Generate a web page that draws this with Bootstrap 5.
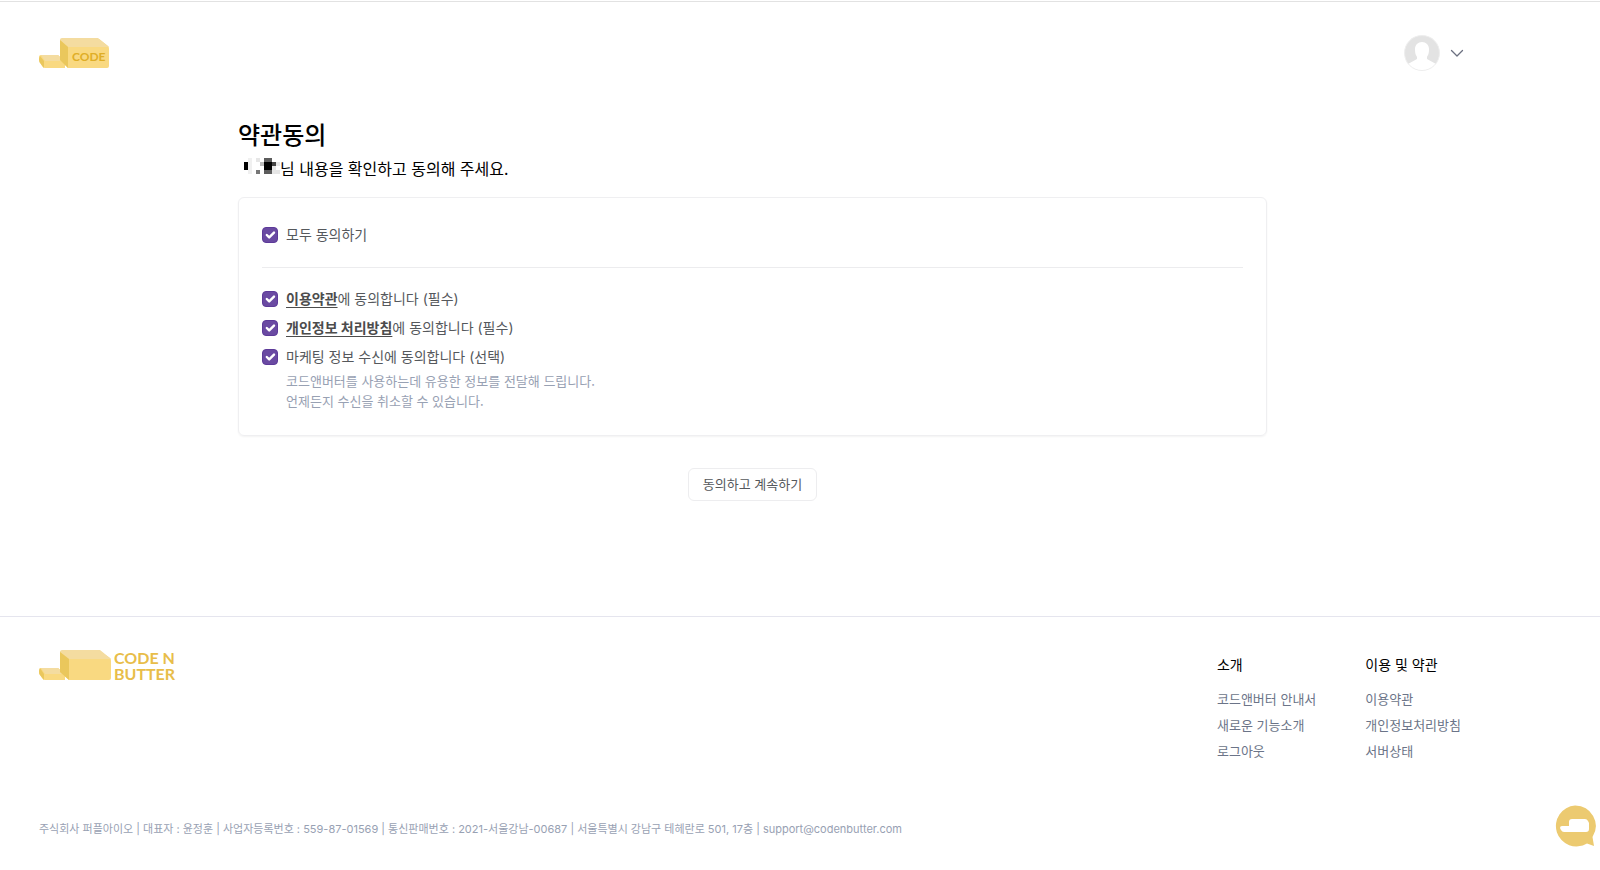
<!DOCTYPE html>
<html lang="ko">
<head>
<meta charset="utf-8">
<meta name="viewport" content="width=device-width, initial-scale=1">
<title>약관동의 - 코드앤버터</title>
<link href="https://cdn.jsdelivr.net/npm/bootstrap@5.3.0/dist/css/bootstrap.min.css" rel="stylesheet">
<style>
  body { font-family: Inter, "Noto Sans CJK KR", sans-serif; font-size: 14px; line-height: 20px; color: #55585c; border-top: 1px solid #fff; }
  .page-top { border-top: 1px solid #e2e2e2; }
  .shell { max-width: 1505px; padding-left: 39px; padding-right: 39px; }
  .site-header { height: 102px; }
  .terms-wrap { max-width: 1029px; padding-bottom: 114px; }
  .page-title { font-size: 24px; line-height: 32px; font-weight: 500; color: #000; }
  .page-sub, .hint, .btn-agree, .footer-cols a { font-family: "Noto Sans CJK KR", sans-serif; }
  .page-sub { font-size: 16px; line-height: 24px; color: #000; margin-top: 4px; margin-bottom: 17px; }
  .terms-card { border: 1px solid #efeff1; border-radius: 6px; padding: 27px 23px 24px; box-shadow: 0 1px 2px rgba(0,0,0,.05); }
  .terms-card hr { color: #ececee; opacity: 1; margin: 22px 0 21px; }
  .terms-card .form-check { padding-left: 24px; min-height: 0; margin: 0; }
  .terms-card .form-check-input { width: 16px; height: 16px; margin: 2px 0 0 -24px; border-radius: 4px; }
  .terms-card .form-check-input:checked { background-color: #6a4aa2; border-color: #5d3a99; background-size: 16px; }
  .terms-card a { color: #4c4c4c; font-weight: 700; text-underline-offset: 3px; }
  .stack { display: grid; row-gap: 9px; }
  .hint { font-size: 13px; color: #98a1b3; }
  .btn-agree { font-size: 13px; line-height: 20px; padding: 5px 14px 6px; color: #55585c; border: 1px solid #ededef; border-radius: 6px; background: #fff; }
  .site-footer { border-top: 1px solid #e5e5ee; margin-top: 1px; }
  .footer-cols { padding-top: 38px; padding-right: 5px; column-gap: 49px; }
  .footer-cols h2 { font-size: 14px; line-height: 20px; font-weight: 400; color: #000; margin-bottom: 14px; }
  .footer-cols ul { display: grid; row-gap: 6px; }
  .footer-cols a { font-size: 13px; line-height: 20px; color: #6b7488; text-decoration: none; }
  .footer-logo { margin-top: 33px; column-gap: 3px; font-size: 16px; line-height: 16px; color: #e8bd49; text-decoration: none; }
  .legal { font-size: 11px; line-height: 20px; color: #98a1b3; padding-top: 58px; padding-bottom: 30px; }
  .logo-text { font-family: Lato, sans-serif; font-weight: 700; }
  .btn-chat { right: 4px; bottom: 23px; }
</style>
</head>
<body>
<div class="page-top">
  <header class="shell site-header d-flex align-items-center justify-content-between">
    <a href="#" aria-label="CODE">
      <svg class="d-block" width="71" height="31" viewBox="0 0 71 31">
        <path d="M2 17h17l7 7v6H6q-2 0-3-2l-2-4q-1-1-1-3v-2q0-2 2-2z" fill="#f9d981"/>
        <path d="M2 17h17l7 6H6z" fill="#f4dca0"/>
        <path d="M1 18l4 5v7l-4-5q-1-1-1-4z" fill="#eac75c"/>
        <path d="M23 1h37l9 7q1 1 1 3v17q0 2-2 2H29l-8-8V3q0-2 2-2z" fill="#f9d981"/>
        <path d="M23 0h36l11 9H29l-8-7q0-2 2-2z" fill="#f4dca0"/>
        <path d="M21 2l8 7v21l-8-8z" fill="#eac75c"/>
        <text class="logo-text" x="33" y="23" font-size="12" fill="#dfae27">CODE</text>
      </svg>
    </a>
    <button type="button" class="btn p-0 border-0 d-flex align-items-center gap-2" aria-label="내 계정">
      <svg width="36" height="36" viewBox="0 0 36 36">
        <circle cx="18" cy="18" r="17.5" fill="#e3e3e3"/>
        <path d="M18 7c4 0 7 3 7 7 0 5-1 6-2 8v2l9 5c-3 4-8 6.500-14 6.500S7 33 4 29l9-5v-2c-1-2-2-3-2-8 0-4 3-7 7-7z" fill="#fff"/>
        <circle cx="18" cy="18" r="17.500" fill="none" stroke="#eee"/>
      </svg>
      <svg width="18" height="18" viewBox="0 0 18 18" fill="none" stroke="#6b7080" stroke-width="1.300" stroke-linecap="round" stroke-linejoin="round"><path d="M3.500 6.500l5.500 5.500 5.500-5.500"/></svg>
    </button>
  </header>

  <main class="shell">
    <div class="terms-wrap mx-auto pt-3">
      <h1 class="page-title mb-0">약관동의</h1>
      <p class="page-sub d-flex align-items-start">
        <svg class="flex-shrink-0" width="42" height="18" viewBox="0 -2 42 18" shape-rendering="crispEdges" aria-hidden="true">
          <path d="M6 4h4v8H6z" fill="#000"/>
          <path d="M10 0h4v16h-4z" fill="#f0f0f0"/>
          <path d="M18 0h4v4h-4zM38 4h4v4h-4zM34 8h4v8h-4zM38 12h4v4h-4z" fill="#e6e6e6"/>
          <path d="M22 4h4v4h-4z" fill="#bbb"/>
          <path d="M18 12h4v4h-4z" fill="#777"/>
          <path d="M26 0h8v4h-8zM26 12h8v4h-8z" fill="#5c5c5c"/>
          <path d="M26 4h8v8h-8z" fill="#000"/>
          <path d="M34 4h4v4h-4z" fill="#444"/>
        </svg>
        <span>님 내용을 확인하고 동의해 주세요.</span>
      </p>
      <form>
        <div class="terms-card">
          <div class="form-check">
            <input class="form-check-input" type="checkbox" id="agreeAll" checked>
            <label for="agreeAll">모두 동의하기</label>
          </div>
          <hr>
          <div class="stack">
            <div class="form-check">
              <input class="form-check-input" type="checkbox" id="agreeTerms" checked>
              <label for="agreeTerms"><a href="#">이용약관</a>에 동의합니다 (필수)</label>
            </div>
            <div class="form-check">
              <input class="form-check-input" type="checkbox" id="agreePrivacy" checked>
              <label for="agreePrivacy"><a href="#">개인정보 처리방침</a>에 동의합니다 (필수)</label>
            </div>
            <div class="form-check">
              <input class="form-check-input" type="checkbox" id="agreeMarketing" checked aria-describedby="marketingHint">
              <label for="agreeMarketing">마케팅 정보 수신에 동의합니다 (선택)</label>
              <div class="hint mt-1" id="marketingHint">코드앤버터를 사용하는데 유용한 정보를 전달해 드립니다.<br>언제든지 수신을 취소할 수 있습니다.</div>
            </div>
          </div>
        </div>
        <div class="text-center mt-4 pt-2">
          <button type="submit" class="btn btn-agree">동의하고 계속하기</button>
        </div>
      </form>
    </div>
  </main>

  <footer class="site-footer">
    <div class="shell">
      <div class="d-flex justify-content-between align-items-start">
        <a href="#" class="footer-logo logo-text d-flex">
          <svg class="d-block" width="72" height="31" viewBox="0 0 72 31" aria-hidden="true">
            <path d="M2 18h17l7 6v6H6q-2 0-3-2l-2-3q-1-1-1-3v-2q0-2 2-2z" fill="#f9d981"/>
            <path d="M2 18h17l7 6H6z" fill="#f4dca0"/>
            <path d="M1 18l4 6v6l-4-5q-1-1-1-4z" fill="#eac75c"/>
            <path d="M23 1h38l10 7q1 1 1 3v17q0 2-2 2H30l-9-8V3q0-2 2-2z" fill="#f9d981"/>
            <path d="M23 0h38l11 9H30l-9-7q0-2 2-2z" fill="#f4dca0"/>
            <path d="M21 2l9 7v21l-9-8z" fill="#eac75c"/>
          </svg>
          <span>CODE N<br>BUTTER</span>
        </a>
        <nav class="footer-cols d-flex">
          <div>
            <h2>소개</h2>
            <ul class="list-unstyled mb-0">
              <li><a href="#">코드앤버터 안내서</a></li>
              <li><a href="#">새로운 기능소개</a></li>
              <li><a href="#">로그아웃</a></li>
            </ul>
          </div>
          <div>
            <h2>이용 및 약관</h2>
            <ul class="list-unstyled mb-0">
              <li><a href="#">이용약관</a></li>
              <li><a href="#">개인정보처리방침</a></li>
              <li><a href="#">서버상태</a></li>
            </ul>
          </div>
        </nav>
      </div>
      <p class="legal mb-0">주식회사 퍼플아이오 | 대표자 : 윤정훈 | 사업자등록번호 : 559-87-01569 | 통신판매번호 : 2021-서울강남-00687 | 서울특별시 강남구 테헤란로 501, 17층 | support@codenbutter.com</p>
    </div>
  </footer>
</div>

<button type="button" class="btn btn-chat p-0 border-0 position-fixed" aria-label="문의하기">
  <svg class="d-block" width="42" height="42" viewBox="0 0 42 42">
    <path d="M21 .5a20.500 20.500 0 0 1 17.500 31.500l1.500 9-7-2.500A20.500 20.500 0 1 1 21 .5z" fill="#ecca70"/>
    <path d="M8 21h7v-4q0-3 3-3h13q2 0 3 2l1 2v6q0 3-3 3H10q-2 0-3-2l-1-2q0-2 2-2z" fill="#fff"/>
  </svg>
</button>
<script src="https://cdn.jsdelivr.net/npm/bootstrap@5.3.0/dist/js/bootstrap.bundle.min.js"></script>
</body>
</html>
